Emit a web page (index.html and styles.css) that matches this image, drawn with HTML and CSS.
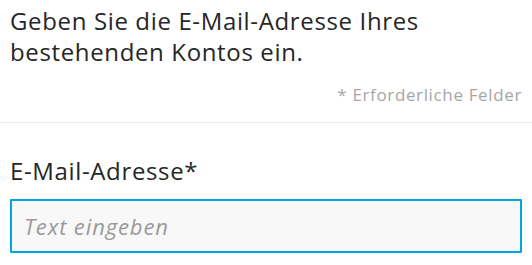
FILE: index.html
```html
<!DOCTYPE html>
<html lang="de">
<head>
    <meta charset="UTF-8">
    <meta name="viewport" content="width=device-width, initial-scale=1.0">
    <title>Konto anmelden</title>
    <link rel="stylesheet" href="styles.css">
</head>
<body>
    <div class="intro">
        <p class="intro-text">Geben Sie die E-Mail-Adresse Ihres bestehenden Kontos ein.</p>
        <p class="required-note">* Erforderliche Felder</p>
    </div>

    <div class="form-section">
        <label class="field-label" for="email">E-Mail-Adresse*</label>
        <input class="text-input" id="email" type="email" placeholder="Text eingeben">
    </div>
</body>
</html>
```

FILE: styles.css
```css
body {
    margin: 0;
    background: #fff;
    color: #262626;
    font-family: "Open Sans", "Noto Sans", sans-serif;
    letter-spacing: 0.04em;
}
.intro {
    padding: 0 10px 16px;
    border-bottom: 1px solid #ececec;
}
.intro-text {
    margin: 0;
    padding-top: 5px;
    font-size: 24px;
    line-height: 31px;
}
.required-note {
    margin: 17px 0 0;
    text-align: right;
    font-size: 17px;
    line-height: 22px;
    color: #a6a6a6;
}
.form-section {
    padding: 33px 10px 0;
}
.field-label {
    display: block;
    font-size: 24px;
    line-height: 30px;
    margin-bottom: 13px;
}
.text-input {
    display: block;
    box-sizing: border-box;
    width: 100%;
    height: 54px;
    margin: 0;
    padding: 0 12px;
    border: 2px solid #00a6de;
    border-radius: 1px;
    background: #f8f8f8;
    font-family: inherit;
    font-size: 22px;
    letter-spacing: 0.04em;
    color: #262626;
    outline: none;
}
.text-input::placeholder {
    color: #9a9a9a;
    font-style: italic;
}
```
